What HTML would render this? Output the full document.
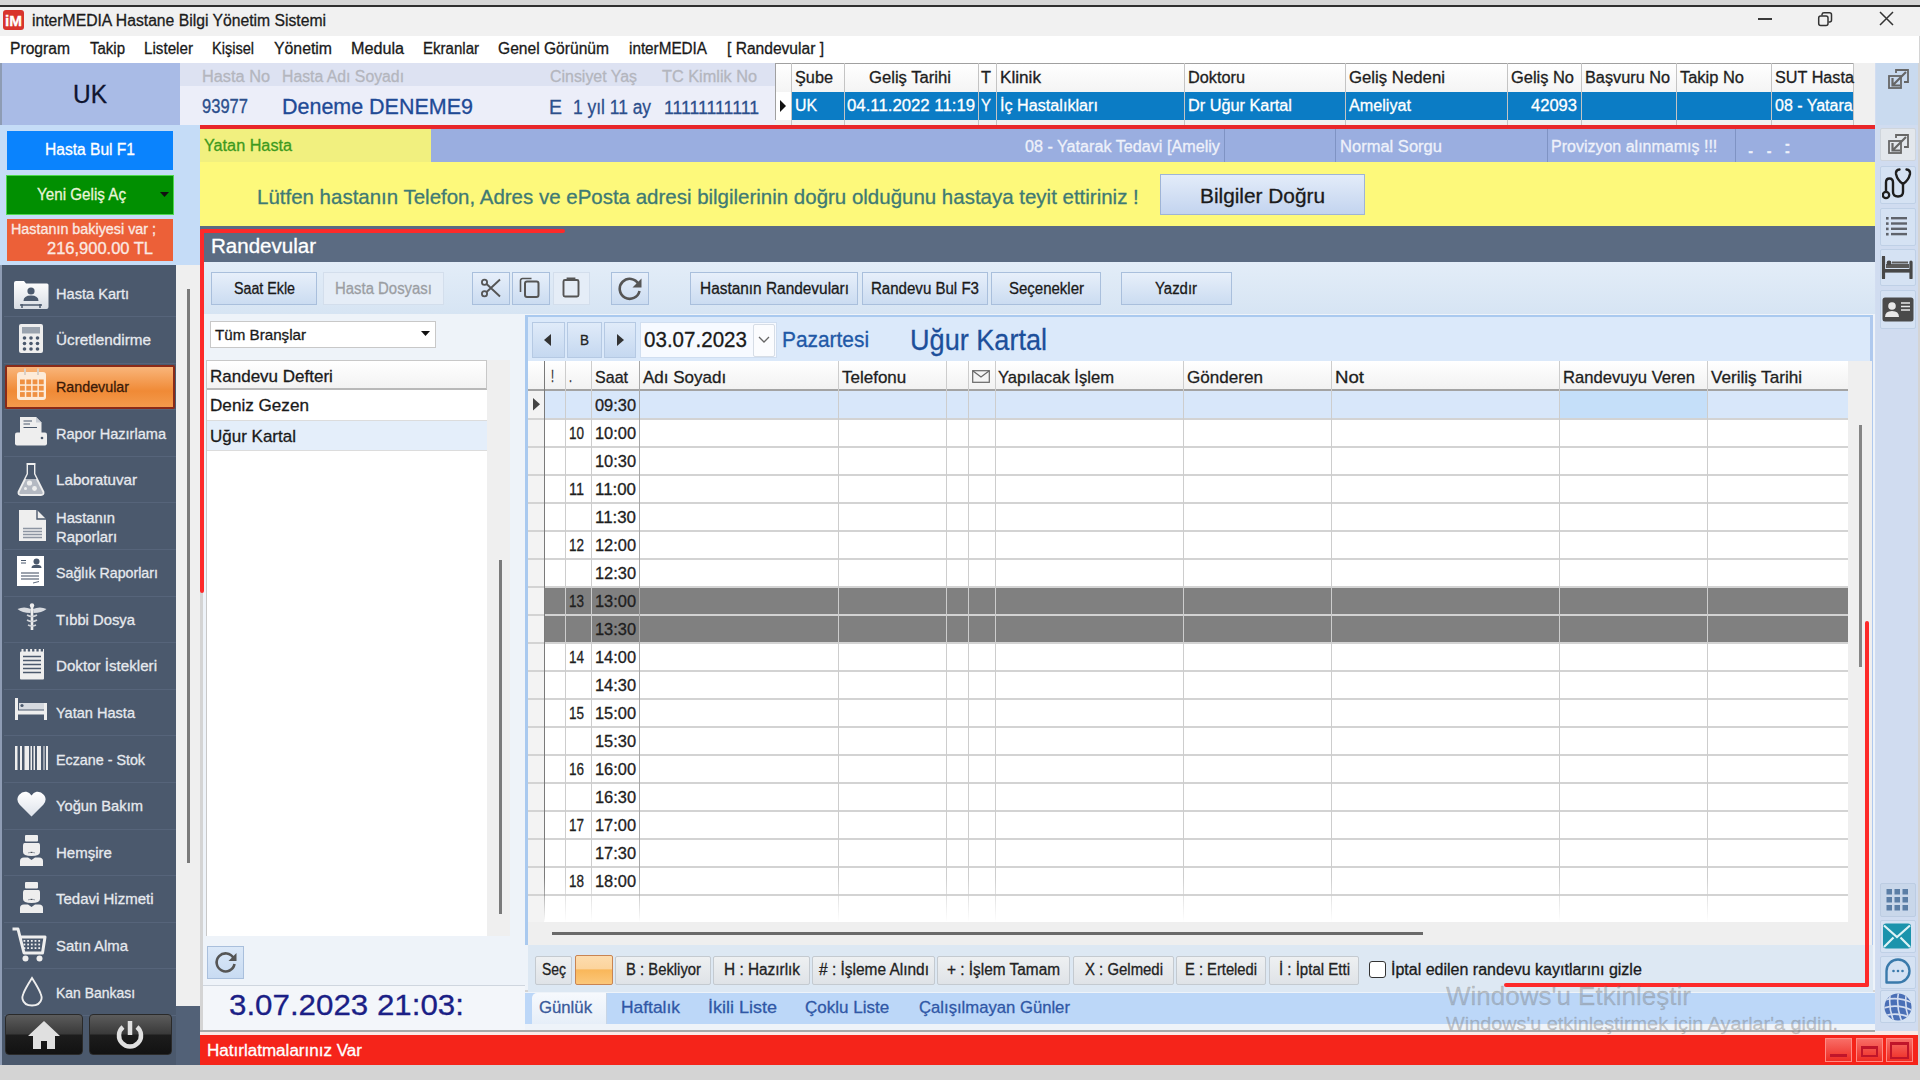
<!DOCTYPE html>
<html><head><meta charset="utf-8">
<style>
*{box-sizing:border-box;margin:0;padding:0}
html,body{width:1920px;height:1080px;overflow:hidden;background:#d4d4d4;font-family:"Liberation Sans",sans-serif;position:relative}
.a{position:absolute}
.t{position:absolute;white-space:nowrap;line-height:1;-webkit-text-stroke:0.3px currentColor}
svg{position:absolute}
</style></head><body>
<div class="a" style="left:0px;top:0px;width:1920px;height:5px;background:#d7d7d7;"></div>
<div class="a" style="left:0px;top:5px;width:1920px;height:2px;background:#303030;"></div>
<div class="a" style="left:0px;top:7px;width:1920px;height:29px;background:#f1f1f1;"></div>
<div class="a" style="left:3px;top:10px;width:21px;height:20px;background:#d8342c;border-radius:3px"></div>
<div class="t" style="left:5.0px;top:12.5px;font-size:15.30px;color:#fff;font-weight:bold;">iM</div>
<div class="t" style="left:32.0px;top:13.2px;font-size:16.00px;color:#1c1c1c;transform:scale(0.982,1.000);transform-origin:0 50%;">interMEDIA Hastane Bilgi Yönetim Sistemi</div>
<div class="a" style="left:1758px;top:18px;width:14px;height:2px;background:#3a3a3a;"></div>
<svg style="left:1817px;top:11px" width="17" height="17" viewBox="0 0 17 17"><rect x="1.7" y="5" width="9.3" height="9.5" rx="2" fill="none" stroke="#333" stroke-width="1.5"/><path d="M5 4.5V3.5A2 2 0 0 1 7 1.7h5.5a2 2 0 0 1 2 2V9a2 2 0 0 1-2 2h-1" fill="none" stroke="#333" stroke-width="1.5"/></svg>
<svg style="left:1879px;top:11px" width="15" height="15" viewBox="0 0 15 15"><path d="M1 1L14 14M14 1L1 14" stroke="#333" stroke-width="1.5"/></svg>
<div class="a" style="left:0px;top:36px;width:1919px;height:27px;background:#ffffff;"></div>
<div class="t" style="left:10.0px;top:41.2px;font-size:16.00px;color:#1a1a1a;transform:scale(0.978,1.000);transform-origin:0 50%;">Program</div>
<div class="t" style="left:90.0px;top:41.2px;font-size:16.00px;color:#1a1a1a;transform:scale(0.937,1.000);transform-origin:0 50%;">Takip</div>
<div class="t" style="left:144.0px;top:41.2px;font-size:16.00px;color:#1a1a1a;transform:scale(0.950,1.000);transform-origin:0 50%;">Listeler</div>
<div class="t" style="left:212.0px;top:41.2px;font-size:16.00px;color:#1a1a1a;transform:scale(0.908,1.000);transform-origin:0 50%;">Kişisel</div>
<div class="t" style="left:274.0px;top:41.2px;font-size:16.00px;color:#1a1a1a;transform:scale(0.988,1.000);transform-origin:0 50%;">Yönetim</div>
<div class="t" style="left:351.0px;top:41.2px;font-size:16.00px;color:#1a1a1a;transform:scale(1.010,1.000);transform-origin:0 50%;">Medula</div>
<div class="t" style="left:423.0px;top:41.2px;font-size:16.00px;color:#1a1a1a;transform:scale(0.940,1.000);transform-origin:0 50%;">Ekranlar</div>
<div class="t" style="left:498.0px;top:41.2px;font-size:16.00px;color:#1a1a1a;transform:scale(0.975,1.000);transform-origin:0 50%;">Genel Görünüm</div>
<div class="t" style="left:629.0px;top:41.2px;font-size:16.00px;color:#1a1a1a;transform:scale(0.954,1.000);transform-origin:0 50%;">interMEDIA</div>
<div class="t" style="left:727.0px;top:41.2px;font-size:16.00px;color:#1a1a1a;transform:scale(0.974,1.000);transform-origin:0 50%;">[ Randevular ]</div>
<div class="a" style="left:0px;top:63px;width:180px;height:62px;background:#a9bbe6;"></div>
<div class="a" style="left:0px;top:63px;width:2px;height:1002px;background:#8e9cb4;"></div>
<div class="t" style="left:73.0px;top:81.3px;font-size:26.00px;color:#0f1530;transform:scale(0.941,1.000);transform-origin:0 50%;">UK</div>
<div class="a" style="left:180px;top:63px;width:595px;height:23px;background:#dde2f2;"></div>
<div class="a" style="left:180px;top:86px;width:595px;height:39px;background:#eceef9;"></div>
<div class="t" style="left:202.0px;top:69.2px;font-size:16.00px;color:#b4b6be;transform:scale(1.020,1.000);transform-origin:0 50%;">Hasta No</div>
<div class="t" style="left:282.0px;top:69.2px;font-size:16.00px;color:#b4b6be;transform:scale(0.987,1.000);transform-origin:0 50%;">Hasta Adı Soyadı</div>
<div class="t" style="left:550.0px;top:69.2px;font-size:16.00px;color:#b4b6be;transform:scale(0.995,1.000);transform-origin:0 50%;">Cinsiyet Yaş</div>
<div class="t" style="left:662.0px;top:69.2px;font-size:16.00px;color:#b4b6be;transform:scale(1.018,1.000);transform-origin:0 50%;">TC Kimlik No</div>
<div class="t" style="left:202.0px;top:97.2px;font-size:18.00px;color:#2c4f8c;transform:scale(0.919,1.150);transform-origin:0 50%;">93977</div>
<div class="t" style="left:282.0px;top:96.5px;font-size:21.48px;color:#1f4a96;">Deneme DENEME9</div>
<div class="t" style="left:549.0px;top:97.2px;font-size:20.00px;color:#2c4f8c;transform:scale(0.974,1.000);transform-origin:0 50%;">E</div>
<div class="t" style="left:573.0px;top:97.2px;font-size:20.00px;color:#2c4f8c;transform:scale(0.870,1.000);transform-origin:0 50%;">1 yıl 11 ay</div>
<div class="t" style="left:664.0px;top:97.7px;font-size:19.00px;color:#2c4f8c;transform:scale(0.930,1.000);transform-origin:0 50%;">11111111111</div>
<div class="a" style="left:775px;top:63px;width:1100px;height:62px;background:#f0f0f0;"></div>
<div class="a" style="left:775px;top:63px;width:1078px;height:29px;background:linear-gradient(#ffffff,#f4f4f4);border-top:1px solid #a0a0a0;border-left:1px solid #a0a0a0"></div>
<div class="a" style="left:775px;top:92px;width:16px;height:28px;background:#ffffff;border-left:1px solid #a0a0a0"></div>
<svg style="left:779px;top:99px" width="8" height="14"><path d="M1 1L7 7L1 13Z" fill="#111"/></svg>
<div class="a" style="left:791px;top:92px;width:1062px;height:28px;background:#0b7cc5;"></div>
<div class="a" style="left:791px;top:63px;width:1px;height:62px;background:#c4c4c4;"></div>
<div class="a" style="left:844px;top:63px;width:1px;height:62px;background:#c4c4c4;"></div>
<div class="a" style="left:978px;top:63px;width:1px;height:62px;background:#c4c4c4;"></div>
<div class="a" style="left:996px;top:63px;width:1px;height:62px;background:#c4c4c4;"></div>
<div class="a" style="left:1184px;top:63px;width:1px;height:62px;background:#c4c4c4;"></div>
<div class="a" style="left:1345px;top:63px;width:1px;height:62px;background:#c4c4c4;"></div>
<div class="a" style="left:1507px;top:63px;width:1px;height:62px;background:#c4c4c4;"></div>
<div class="a" style="left:1581px;top:63px;width:1px;height:62px;background:#c4c4c4;"></div>
<div class="a" style="left:1676px;top:63px;width:1px;height:62px;background:#c4c4c4;"></div>
<div class="a" style="left:1771px;top:63px;width:1px;height:62px;background:#c4c4c4;"></div>
<div class="a" style="left:1853px;top:63px;width:1px;height:62px;background:#c4c4c4;"></div>
<div class="t" style="left:795.0px;top:70.2px;font-size:16.00px;color:#1e1e1e;transform:scale(1.017,1.000);transform-origin:0 50%;">Şube</div>
<div class="t" style="left:869.0px;top:70.2px;font-size:16.00px;color:#1e1e1e;transform:scale(1.040,1.000);transform-origin:0 50%;">Geliş Tarihi</div>
<div class="t" style="left:981.0px;top:70.2px;font-size:16.00px;color:#1e1e1e;transform:scale(1.023,1.000);transform-origin:0 50%;">T</div>
<div class="t" style="left:1000.0px;top:70.2px;font-size:16.00px;color:#1e1e1e;transform:scale(1.072,1.000);transform-origin:0 50%;">Klinik</div>
<div class="t" style="left:1188.0px;top:70.2px;font-size:16.00px;color:#1e1e1e;transform:scale(1.017,1.000);transform-origin:0 50%;">Doktoru</div>
<div class="t" style="left:1349.0px;top:70.2px;font-size:16.00px;color:#1e1e1e;transform:scale(1.048,1.000);transform-origin:0 50%;">Geliş Nedeni</div>
<div class="t" style="left:1511.0px;top:70.2px;font-size:16.00px;color:#1e1e1e;transform:scale(1.027,1.000);transform-origin:0 50%;">Geliş No</div>
<div class="t" style="left:1585.0px;top:70.2px;font-size:16.00px;color:#1e1e1e;transform:scale(1.017,1.000);transform-origin:0 50%;">Başvuru No</div>
<div class="t" style="left:1680.0px;top:70.2px;font-size:16.00px;color:#1e1e1e;transform:scale(1.028,1.000);transform-origin:0 50%;">Takip No</div>
<div class="t" style="left:1775.0px;top:70.2px;font-size:16.00px;color:#1e1e1e;transform:scale(1.013,1.000);transform-origin:0 50%;">SUT Hasta</div>
<div class="t" style="left:795.0px;top:98.2px;font-size:16.00px;color:#ffffff;transform:scale(0.990,1.000);transform-origin:0 50%;">UK</div>
<div class="t" style="left:847.0px;top:98.2px;font-size:16.00px;color:#ffffff;transform:scale(1.048,1.000);transform-origin:0 50%;">04.11.2022 11:19</div>
<div class="t" style="left:981.0px;top:98.2px;font-size:16.00px;color:#ffffff;transform:scale(0.937,1.000);transform-origin:0 50%;">Y</div>
<div class="t" style="left:1000.0px;top:98.2px;font-size:16.00px;color:#ffffff;transform:scale(1.011,1.000);transform-origin:0 50%;">İç Hastalıkları</div>
<div class="t" style="left:1188.0px;top:98.2px;font-size:16.00px;color:#ffffff;transform:scale(1.017,1.000);transform-origin:0 50%;">Dr Uğur Kartal</div>
<div class="t" style="left:1349.0px;top:98.2px;font-size:16.00px;color:#ffffff;transform:scale(1.011,1.000);transform-origin:0 50%;">Ameliyat</div>
<div class="t" style="left:1531.0px;top:98.2px;font-size:16.00px;color:#ffffff;transform:scale(1.034,1.000);transform-origin:0 50%;">42093</div>
<div class="t" style="left:1775.0px;top:98.2px;font-size:16.00px;color:#ffffff;">08 - Yatara</div>
<div class="a" style="left:1875px;top:63px;width:43px;height:1002px;background:#d2ddf1;"></div>
<div class="a" style="left:176px;top:125px;width:24px;height:140px;background:#c5dcf7;"></div>
<div class="a" style="left:0px;top:125px;width:176px;height:140px;background:#c5dcf7;"></div>
<div class="a" style="left:200px;top:125px;width:1675px;height:4px;background:#e8262a;"></div>
<div class="a" style="left:7px;top:131px;width:166px;height:39px;background:#0a83fd;"></div>
<div class="t" style="left:45.0px;top:142.2px;font-size:16.00px;color:#ffffff;transform:scale(0.973,1.000);transform-origin:0 50%;">Hasta Bul  F1</div>
<div class="a" style="left:6px;top:175px;width:168px;height:40px;background:#018f01;border:1px solid #4fd84f"></div>
<div class="t" style="left:37.0px;top:187.2px;font-size:16.00px;color:#e8f5d8;transform:scale(0.950,1.000);transform-origin:0 50%;">Yeni Geliş Aç</div>
<svg style="left:160px;top:192px" width="9" height="6"><path d="M0 0H9L4.5 5Z" fill="#111"/></svg>
<div class="a" style="left:7px;top:219px;width:166px;height:42px;background:#ec6038;"></div>
<div class="t" style="left:11.0px;top:221.7px;font-size:14.00px;color:#fbe9e2;transform:scale(1.024,1.000);transform-origin:0 50%;">Hastanın bakiyesi var ;</div>
<div class="t" style="left:47.0px;top:241.2px;font-size:16.00px;color:#fbe9e2;transform:scale(1.030,1.000);transform-origin:0 50%;">216,900.00 TL</div>
<div class="a" style="left:2px;top:265px;width:174px;height:800px;background:#4b596d;"></div>
<div class="a" style="left:176px;top:265px;width:24px;height:741px;background:#efefef;"></div>
<div class="a" style="left:187px;top:289px;width:3px;height:574px;background:#7a7a7a;"></div>
<div class="a" style="left:176px;top:1006px;width:24px;height:59px;background:#526177;"></div>
<div class="a" style="left:4px;top:316px;width:172px;height:1px;background:#56647a;"></div>
<div class="a" style="left:4px;top:363px;width:172px;height:1px;background:#56647a;"></div>
<div class="a" style="left:4px;top:409px;width:172px;height:1px;background:#56647a;"></div>
<div class="a" style="left:4px;top:456px;width:172px;height:1px;background:#56647a;"></div>
<div class="a" style="left:4px;top:502px;width:172px;height:1px;background:#56647a;"></div>
<div class="a" style="left:4px;top:549px;width:172px;height:1px;background:#56647a;"></div>
<div class="a" style="left:4px;top:596px;width:172px;height:1px;background:#56647a;"></div>
<div class="a" style="left:4px;top:642px;width:172px;height:1px;background:#56647a;"></div>
<div class="a" style="left:4px;top:689px;width:172px;height:1px;background:#56647a;"></div>
<div class="a" style="left:4px;top:735px;width:172px;height:1px;background:#56647a;"></div>
<div class="a" style="left:4px;top:782px;width:172px;height:1px;background:#56647a;"></div>
<div class="a" style="left:4px;top:829px;width:172px;height:1px;background:#56647a;"></div>
<div class="a" style="left:4px;top:875px;width:172px;height:1px;background:#56647a;"></div>
<div class="a" style="left:4px;top:922px;width:172px;height:1px;background:#56647a;"></div>
<div class="a" style="left:4px;top:968px;width:172px;height:1px;background:#56647a;"></div>
<div class="a" style="left:4px;top:1015px;width:172px;height:1px;background:#56647a;"></div>
<div class="a" style="left:5px;top:365px;width:170px;height:44px;background:linear-gradient(#f9b57a,#f08a36 60%,#f39a4c);border:2px solid #8a2a18;border-radius:2px"></div>
<div class="t" style="left:56.0px;top:285.7px;font-size:15.00px;color:#e6e9ee;transform:scale(0.973,1.000);transform-origin:0 50%;">Hasta Kartı</div>
<div class="t" style="left:56.0px;top:331.7px;font-size:15.00px;color:#e6e9ee;transform:scale(1.018,1.000);transform-origin:0 50%;">Ücretlendirme</div>
<div class="t" style="left:56.0px;top:378.7px;font-size:15.00px;color:#3a1a08;transform:scale(0.952,1.000);transform-origin:0 50%;">Randevular</div>
<div class="t" style="left:56.0px;top:425.7px;font-size:15.00px;color:#e6e9ee;transform:scale(0.970,1.000);transform-origin:0 50%;">Rapor Hazırlama</div>
<div class="t" style="left:56.0px;top:471.7px;font-size:15.00px;color:#e6e9ee;transform:scale(1.012,1.000);transform-origin:0 50%;">Laboratuvar</div>
<div class="t" style="left:56.0px;top:509.7px;font-size:15.00px;color:#e6e9ee;transform:scale(0.983,1.000);transform-origin:0 50%;">Hastanın</div>
<div class="t" style="left:56.0px;top:528.7px;font-size:15.00px;color:#e6e9ee;transform:scale(0.989,1.000);transform-origin:0 50%;">Raporları</div>
<div class="t" style="left:56.0px;top:564.7px;font-size:15.00px;color:#e6e9ee;transform:scale(0.948,1.000);transform-origin:0 50%;">Sağlık Raporları</div>
<div class="t" style="left:56.0px;top:611.7px;font-size:15.00px;color:#e6e9ee;transform:scale(0.987,1.000);transform-origin:0 50%;">Tıbbi Dosya</div>
<div class="t" style="left:56.0px;top:657.7px;font-size:15.00px;color:#e6e9ee;transform:scale(1.010,1.000);transform-origin:0 50%;">Doktor İstekleri</div>
<div class="t" style="left:56.0px;top:704.7px;font-size:15.00px;color:#e6e9ee;transform:scale(0.970,1.000);transform-origin:0 50%;">Yatan Hasta</div>
<div class="t" style="left:56.0px;top:751.7px;font-size:15.00px;color:#e6e9ee;transform:scale(0.953,1.000);transform-origin:0 50%;">Eczane - Stok</div>
<div class="t" style="left:56.0px;top:797.7px;font-size:15.00px;color:#e6e9ee;transform:scale(0.981,1.000);transform-origin:0 50%;">Yoğun Bakım</div>
<div class="t" style="left:56.0px;top:844.7px;font-size:15.00px;color:#e6e9ee;">Hemşire</div>
<div class="t" style="left:56.0px;top:890.7px;font-size:15.00px;color:#e6e9ee;">Tedavi Hizmeti</div>
<div class="t" style="left:56.0px;top:937.7px;font-size:15.00px;color:#e6e9ee;transform:scale(0.993,1.000);transform-origin:0 50%;">Satın Alma</div>
<div class="t" style="left:56.0px;top:984.7px;font-size:15.00px;color:#e6e9ee;transform:scale(0.929,1.000);transform-origin:0 50%;">Kan Bankası</div>
<div class="a" style="left:5px;top:1014px;width:78px;height:41px;background:linear-gradient(#5c5c5c,#3a3a3a 48%,#1c1c1c 52%,#121212);border-radius:4px;border:1px solid #2a2a2a"></div>
<div class="a" style="left:89px;top:1014px;width:83px;height:41px;background:linear-gradient(#5c5c5c,#3a3a3a 48%,#1c1c1c 52%,#121212);border-radius:4px;border:1px solid #2a2a2a"></div>
<svg style="left:26px;top:1019px" width="36" height="32" viewBox="0 0 36 32"><path d="M18 2L2 17h5v13h8v-8h6v8h8V17h5Z" fill="#e0e0e0"/></svg>
<svg style="left:113px;top:1018px" width="34" height="34" viewBox="0 0 34 34"><path d="M10 9A11 11 0 1 0 24 9" fill="none" stroke="#e0e0e0" stroke-width="4.5"/><path d="M17 3V17" stroke="#e0e0e0" stroke-width="4.5"/></svg>
<div class="a" style="left:0px;top:1065px;width:1920px;height:15px;background:#d4d4d4;"></div>
<div class="a" style="left:200px;top:129px;width:1675px;height:33px;background:#9aaee0;"></div>
<div class="a" style="left:200px;top:129px;width:231px;height:33px;background:#f1f07f;"></div>
<div class="t" style="left:204.0px;top:138.2px;font-size:16.00px;color:#3e9a1e;transform:scale(1.013,1.000);transform-origin:0 50%;">Yatan Hasta</div>
<div class="a" style="left:1224px;top:129px;width:1px;height:33px;background:#7f93c4;"></div>
<div class="a" style="left:1335px;top:129px;width:1px;height:33px;background:#7f93c4;"></div>
<div class="a" style="left:1547px;top:129px;width:1px;height:33px;background:#7f93c4;"></div>
<div class="a" style="left:1735px;top:129px;width:1px;height:33px;background:#7f93c4;"></div>
<div class="t" style="left:1025.0px;top:139.2px;font-size:16.00px;color:#eef1fa;transform:scale(1.010,1.000);transform-origin:0 50%;">08 - Yatarak Tedavi [Ameliy</div>
<div class="t" style="left:1340.0px;top:139.2px;font-size:16.00px;color:#eef1fa;transform:scale(1.033,1.000);transform-origin:0 50%;">Normal Sorgu</div>
<div class="t" style="left:1551.0px;top:139.2px;font-size:16.00px;color:#eef1fa;">Provizyon alınmamış !!!</div>
<div class="t" style="left:1746.0px;top:140.2px;font-size:16.00px;color:#eef1fa;transform:scale(2.070,1.000);transform-origin:0 50%;">. .     :</div>
<div class="a" style="left:200px;top:162px;width:1675px;height:64px;background:#fdf97b;"></div>
<div class="t" style="left:257.0px;top:185.7px;font-size:21.00px;color:#3f7a74;transform:scale(0.975,1.000);transform-origin:0 50%;">Lütfen hastanın Telefon, Adres ve ePosta adresi bilgilerinin doğru olduğunu hastaya teyit ettiriniz !</div>
<div class="a" style="left:1160px;top:174px;width:205px;height:41px;background:linear-gradient(#e3ecf9,#c3d4ef);border:1px solid #9fb4d6"></div>
<div class="t" style="left:1199.5px;top:186.2px;font-size:20.00px;color:#1a1a1a;transform:scale(1.041,1.000);transform-origin:0 50%;">Bilgiler Doğru</div>
<div class="a" style="left:200px;top:226px;width:1675px;height:36px;background:#5b6b82;"></div>
<div class="t" style="left:211.0px;top:236.2px;font-size:20.00px;color:#ffffff;transform:scale(1.027,1.000);transform-origin:0 50%;">Randevular</div>
<div class="a" style="left:203px;top:262px;width:1672px;height:54px;background:linear-gradient(#e3edf8,#d6e4f3)"></div>
<div class="a" style="left:211px;top:272px;width:106px;height:33px;background:linear-gradient(#e7effa,#cbdcf1);border:1px solid #a9bfdc"></div>
<div class="t" style="left:233.5px;top:281.2px;font-size:16.00px;color:#1a1a1a;transform:scale(0.891,1.000);transform-origin:0 50%;">Saat Ekle</div>
<div class="a" style="left:323px;top:272px;width:121px;height:33px;background:#e5edf7;border:1px solid #d3deec"></div>
<div class="t" style="left:334.5px;top:281.2px;font-size:16.00px;color:#9b9ea3;transform:scale(0.932,1.000);transform-origin:0 50%;">Hasta Dosyası</div>
<div class="a" style="left:472px;top:272px;width:38px;height:33px;background:linear-gradient(#e7effa,#cbdcf1);border:1px solid #a9bfdc"></div>
<div class="a" style="left:512px;top:272px;width:38px;height:33px;background:linear-gradient(#e7effa,#cbdcf1);border:1px solid #a9bfdc"></div>
<div class="a" style="left:553px;top:272px;width:37px;height:33px;background:#e5edf7;border:1px solid #d3deec"></div>
<div class="a" style="left:611px;top:272px;width:38px;height:33px;background:linear-gradient(#e7effa,#cbdcf1);border:1px solid #a9bfdc"></div>
<svg style="left:478px;top:276px" width="26" height="24" viewBox="0 0 26 24"><circle cx="6.5" cy="6.3" r="2.6" fill="none" stroke="#555" stroke-width="1.8"/><circle cx="6.5" cy="17.7" r="2.6" fill="none" stroke="#555" stroke-width="1.8"/><path d="M8.6 8L22 20.5M8.6 16L22 3.5" stroke="#555" stroke-width="1.9"/></svg>
<svg style="left:518px;top:276px" width="26" height="24" viewBox="0 0 26 24"><path d="M2.5 16V4.5a2 2 0 0 1 2-2h9" fill="none" stroke="#555" stroke-width="1.6"/><rect x="7" y="5.5" width="13.5" height="15.5" rx="2" fill="none" stroke="#555" stroke-width="2"/></svg>
<svg style="left:558px;top:276px" width="26" height="24" viewBox="0 0 26 24"><rect x="5.5" y="4" width="15" height="16.5" rx="1.5" fill="none" stroke="#555" stroke-width="1.9"/><path d="M9.5 5V2.5h7V5" fill="none" stroke="#555" stroke-width="1.8"/></svg>
<svg style="left:616px;top:275px" width="28" height="26" viewBox="0 0 28 26"><path d="M22.5 9A10 10 0 1 0 23.5 16" fill="none" stroke="#555" stroke-width="2.6"/><path d="M25.5 3.5V12.5H16.5Z" fill="#555"/></svg>
<div class="a" style="left:690px;top:272px;width:168px;height:33px;background:linear-gradient(#e7effa,#cbdcf1);border:1px solid #a9bfdc"></div>
<div class="t" style="left:699.5px;top:281.2px;font-size:16.00px;color:#1a1a1a;transform:scale(0.963,1.000);transform-origin:0 50%;">Hastanın Randevuları</div>
<div class="a" style="left:862px;top:272px;width:126px;height:33px;background:linear-gradient(#e7effa,#cbdcf1);border:1px solid #a9bfdc"></div>
<div class="t" style="left:871.0px;top:281.2px;font-size:16.00px;color:#1a1a1a;transform:scale(0.941,1.000);transform-origin:0 50%;">Randevu Bul F3</div>
<div class="a" style="left:991px;top:272px;width:110px;height:33px;background:linear-gradient(#e7effa,#cbdcf1);border:1px solid #a9bfdc"></div>
<div class="t" style="left:1008.5px;top:281.2px;font-size:16.00px;color:#1a1a1a;transform:scale(0.937,1.000);transform-origin:0 50%;">Seçenekler</div>
<div class="a" style="left:1121px;top:272px;width:111px;height:33px;background:linear-gradient(#e7effa,#cbdcf1);border:1px solid #a9bfdc"></div>
<div class="t" style="left:1155.0px;top:281.2px;font-size:16.00px;color:#1a1a1a;transform:scale(0.932,1.000);transform-origin:0 50%;">Yazdır</div>
<div class="a" style="left:203px;top:314px;width:322px;height:676px;background:#eef3f9;"></div>
<div class="a" style="left:210px;top:321px;width:226px;height:27px;background:#fff;border:1px solid #c8c8c8"></div>
<div class="t" style="left:215.0px;top:326.7px;font-size:15.00px;color:#1a1a1a;transform:scale(1.011,1.000);transform-origin:0 50%;">Tüm Branşlar</div>
<svg style="left:421px;top:331px" width="9" height="6"><path d="M0 0H9L4.5 5Z" fill="#111"/></svg>
<div class="a" style="left:206px;top:360px;width:304px;height:576px;background:#ffffff;border-left:1px solid #c8c8c8;border-top:1px solid #c8c8c8"></div>
<div class="a" style="left:487px;top:360px;width:23px;height:576px;background:#efefef;"></div>
<div class="a" style="left:499px;top:560px;width:3px;height:354px;background:#7a7a7a;"></div>
<div class="a" style="left:207px;top:361px;width:280px;height:29px;background:linear-gradient(#ffffff,#f3f3f3);border-bottom:2px solid #b9b9b9;border-right:1px solid #c8c8c8"></div>
<div class="t" style="left:210.0px;top:367.7px;font-size:17.00px;color:#1a1a1a;">Randevu Defteri</div>
<div class="a" style="left:207px;top:420px;width:280px;height:1px;background:#dcdcdc;"></div>
<div class="a" style="left:207px;top:421px;width:280px;height:30px;background:#e4eefa;"></div>
<div class="a" style="left:207px;top:450px;width:280px;height:1px;background:#dcdcdc;"></div>
<div class="t" style="left:210.0px;top:396.7px;font-size:17.00px;color:#1a1a1a;transform:scale(1.007,1.000);transform-origin:0 50%;">Deniz Gezen</div>
<div class="t" style="left:210.0px;top:427.7px;font-size:17.00px;color:#1a1a1a;">Uğur Kartal</div>
<div class="a" style="left:207px;top:946px;width:37px;height:33px;background:linear-gradient(#dbe8f8,#c8dbf2);border:1px solid #a9bfdc"></div>
<svg style="left:212px;top:949px" width="28" height="26" viewBox="0 0 28 26"><path d="M21.5 9A9 9 0 1 0 22.5 15" fill="none" stroke="#555" stroke-width="2.6"/><path d="M24.5 4V12H16.5Z" fill="#555"/></svg>
<div class="a" style="left:203px;top:985px;width:322px;height:1px;background:#cfd6df;"></div>
<div class="a" style="left:203px;top:986px;width:322px;height:44px;background:#f3f6fa;"></div>
<div class="t" style="left:229.0px;top:990.3px;font-size:30.00px;color:#1b1f86;transform:scale(1.043,1.000);transform-origin:0 50%;">3.07.2023 21:03:</div>
<div class="a" style="left:525px;top:314px;width:1350px;height:676px;background:#eef3f9;"></div>
<div class="a" style="left:525px;top:315px;width:1348px;height:630px;background:#dbe9fa;border-left:3px solid #a9c9ef;border-top:2px solid #a9c9ef;border-right:3px solid #afc9ee"></div>
<div class="a" style="left:532px;top:322px;width:33px;height:36px;background:linear-gradient(#e0ebf9,#c5d8f0);border:1px solid #b5c9e3"></div>
<div class="a" style="left:567px;top:322px;width:35px;height:36px;background:linear-gradient(#e0ebf9,#c5d8f0);border:1px solid #b5c9e3"></div>
<div class="a" style="left:604px;top:322px;width:32px;height:36px;background:linear-gradient(#e0ebf9,#c5d8f0);border:1px solid #b5c9e3"></div>
<svg style="left:544px;top:334px" width="8" height="12"><path d="M7 0V12L0 6Z" fill="#333"/></svg>
<svg style="left:617px;top:334px" width="8" height="12"><path d="M0 0V12L7 6Z" fill="#333"/></svg>
<div class="t" style="left:579.5px;top:333.2px;font-size:14.00px;color:#222;transform:scale(0.964,1.000);transform-origin:0 50%;">B</div>
<div class="a" style="left:640px;top:322px;width:137px;height:36px;background:#f7faff;border:1px solid #d0def0"></div>
<div class="a" style="left:753px;top:324px;width:22px;height:33px;background:#fbfcfe;border:1px solid #d6dde6;border-radius:2px"></div>
<svg style="left:758px;top:336px" width="12" height="8"><path d="M1 1L6 6L11 1" fill="none" stroke="#666" stroke-width="1.3"/></svg>
<div class="t" style="left:644.0px;top:329.3px;font-size:22.00px;color:#1a1a1a;transform:scale(0.935,1.000);transform-origin:0 50%;">03.07.2023</div>
<div class="t" style="left:782.0px;top:329.3px;font-size:22.00px;color:#2158a6;transform:scale(0.949,1.000);transform-origin:0 50%;">Pazartesi</div>
<div class="t" style="left:910.0px;top:325.3px;font-size:30.00px;color:#1d4f9a;transform:scale(0.903,1.000);transform-origin:0 50%;">Uğur Kartal</div>
<div class="a" style="left:528px;top:361px;width:1320px;height:561px;background:#ffffff;"></div>
<div class="a" style="left:1848px;top:361px;width:24px;height:584px;background:#efefef;"></div>
<div class="a" style="left:1859px;top:425px;width:3px;height:242px;background:#858585;"></div>
<div class="a" style="left:528px;top:922px;width:1320px;height:23px;background:#efefef;"></div>
<div class="a" style="left:552px;top:932px;width:871px;height:3px;background:#6a6a6a;"></div>
<div class="a" style="left:528px;top:361px;width:1320px;height:30px;background:linear-gradient(#ffffff,#f2f2f2);border-bottom:2px solid #a3a3a3"></div>
<div class="a" style="left:528px;top:391px;width:16px;height:531px;background:#f3f3f3;"></div>
<div class="a" style="left:545px;top:391px;width:1303px;height:28px;background:#d8e7fa;"></div>
<div class="a" style="left:1559px;top:391px;width:148px;height:28px;background:#c5dff9;"></div>
<div class="a" style="left:545px;top:587px;width:1303px;height:56px;background:#808080;"></div>
<div class="a" style="left:528px;top:418px;width:1320px;height:2px;background:#d3d3d3;"></div>
<div class="a" style="left:528px;top:446px;width:1320px;height:2px;background:#d3d3d3;"></div>
<div class="a" style="left:528px;top:474px;width:1320px;height:2px;background:#d3d3d3;"></div>
<div class="a" style="left:528px;top:502px;width:1320px;height:2px;background:#d3d3d3;"></div>
<div class="a" style="left:528px;top:530px;width:1320px;height:2px;background:#d3d3d3;"></div>
<div class="a" style="left:528px;top:558px;width:1320px;height:2px;background:#d3d3d3;"></div>
<div class="a" style="left:528px;top:586px;width:1320px;height:2px;background:#d3d3d3;"></div>
<div class="a" style="left:528px;top:614px;width:1320px;height:2px;background:#d3d3d3;"></div>
<div class="a" style="left:528px;top:642px;width:1320px;height:2px;background:#d3d3d3;"></div>
<div class="a" style="left:528px;top:670px;width:1320px;height:2px;background:#d3d3d3;"></div>
<div class="a" style="left:528px;top:698px;width:1320px;height:2px;background:#d3d3d3;"></div>
<div class="a" style="left:528px;top:726px;width:1320px;height:2px;background:#d3d3d3;"></div>
<div class="a" style="left:528px;top:754px;width:1320px;height:2px;background:#d3d3d3;"></div>
<div class="a" style="left:528px;top:782px;width:1320px;height:2px;background:#d3d3d3;"></div>
<div class="a" style="left:528px;top:810px;width:1320px;height:2px;background:#d3d3d3;"></div>
<div class="a" style="left:528px;top:838px;width:1320px;height:2px;background:#d3d3d3;"></div>
<div class="a" style="left:528px;top:866px;width:1320px;height:2px;background:#d3d3d3;"></div>
<div class="a" style="left:528px;top:894px;width:1320px;height:2px;background:#d3d3d3;"></div>
<div class="a" style="left:544px;top:361px;width:1px;height:561px;background:linear-gradient(#7a7a7a 92%,rgba(255,255,255,0))"></div>
<div class="a" style="left:565px;top:361px;width:1px;height:561px;background:linear-gradient(#cdcdcd 92%,rgba(255,255,255,0))"></div>
<div class="a" style="left:591px;top:361px;width:1px;height:561px;background:linear-gradient(#cdcdcd 92%,rgba(255,255,255,0))"></div>
<div class="a" style="left:639px;top:361px;width:1px;height:561px;background:linear-gradient(#a9a9a9 92%,rgba(255,255,255,0))"></div>
<div class="a" style="left:838px;top:361px;width:1px;height:561px;background:linear-gradient(#cdcdcd 92%,rgba(255,255,255,0))"></div>
<div class="a" style="left:946px;top:361px;width:1px;height:561px;background:linear-gradient(#cdcdcd 92%,rgba(255,255,255,0))"></div>
<div class="a" style="left:968px;top:361px;width:1px;height:561px;background:linear-gradient(#cdcdcd 92%,rgba(255,255,255,0))"></div>
<div class="a" style="left:995px;top:361px;width:1px;height:561px;background:linear-gradient(#cdcdcd 92%,rgba(255,255,255,0))"></div>
<div class="a" style="left:1183px;top:361px;width:1px;height:561px;background:linear-gradient(#cdcdcd 92%,rgba(255,255,255,0))"></div>
<div class="a" style="left:1331px;top:361px;width:1px;height:561px;background:linear-gradient(#cdcdcd 92%,rgba(255,255,255,0))"></div>
<div class="a" style="left:1559px;top:361px;width:1px;height:561px;background:linear-gradient(#cdcdcd 92%,rgba(255,255,255,0))"></div>
<div class="a" style="left:1707px;top:361px;width:1px;height:561px;background:linear-gradient(#cdcdcd 92%,rgba(255,255,255,0))"></div>
<svg style="left:533px;top:398px" width="8" height="13"><path d="M0 0V12.5L7 6.25Z" fill="#444"/></svg>
<div class="t" style="left:595.0px;top:397.7px;font-size:16.00px;color:#1e1e1e;transform:scale(1.024,1.000);transform-origin:0 50%;">09:30</div>
<div class="t" style="left:595.0px;top:425.7px;font-size:16.00px;color:#1e1e1e;transform:scale(1.024,1.000);transform-origin:0 50%;">10:00</div>
<div class="t" style="left:569.0px;top:425.7px;font-size:16.00px;color:#1e1e1e;transform:scale(0.843,1.000);transform-origin:0 50%;">10</div>
<div class="t" style="left:595.0px;top:453.7px;font-size:16.00px;color:#1e1e1e;transform:scale(1.024,1.000);transform-origin:0 50%;">10:30</div>
<div class="t" style="left:595.0px;top:481.7px;font-size:16.00px;color:#1e1e1e;transform:scale(1.055,1.000);transform-origin:0 50%;">11:00</div>
<div class="t" style="left:569.0px;top:481.7px;font-size:16.00px;color:#1e1e1e;transform:scale(0.903,1.000);transform-origin:0 50%;">11</div>
<div class="t" style="left:595.0px;top:509.7px;font-size:16.00px;color:#1e1e1e;transform:scale(1.055,1.000);transform-origin:0 50%;">11:30</div>
<div class="t" style="left:595.0px;top:537.7px;font-size:16.00px;color:#1e1e1e;transform:scale(1.024,1.000);transform-origin:0 50%;">12:00</div>
<div class="t" style="left:569.0px;top:537.7px;font-size:16.00px;color:#1e1e1e;transform:scale(0.843,1.000);transform-origin:0 50%;">12</div>
<div class="t" style="left:595.0px;top:565.7px;font-size:16.00px;color:#1e1e1e;transform:scale(1.024,1.000);transform-origin:0 50%;">12:30</div>
<div class="t" style="left:595.0px;top:593.7px;font-size:16.00px;color:#1e1e1e;transform:scale(1.024,1.000);transform-origin:0 50%;">13:00</div>
<div class="t" style="left:569.0px;top:593.7px;font-size:16.00px;color:#1e1e1e;transform:scale(0.843,1.000);transform-origin:0 50%;">13</div>
<div class="t" style="left:595.0px;top:621.7px;font-size:16.00px;color:#1e1e1e;transform:scale(1.024,1.000);transform-origin:0 50%;">13:30</div>
<div class="t" style="left:595.0px;top:649.7px;font-size:16.00px;color:#1e1e1e;transform:scale(1.024,1.000);transform-origin:0 50%;">14:00</div>
<div class="t" style="left:569.0px;top:649.7px;font-size:16.00px;color:#1e1e1e;transform:scale(0.843,1.000);transform-origin:0 50%;">14</div>
<div class="t" style="left:595.0px;top:677.7px;font-size:16.00px;color:#1e1e1e;transform:scale(1.024,1.000);transform-origin:0 50%;">14:30</div>
<div class="t" style="left:595.0px;top:705.7px;font-size:16.00px;color:#1e1e1e;transform:scale(1.024,1.000);transform-origin:0 50%;">15:00</div>
<div class="t" style="left:569.0px;top:705.7px;font-size:16.00px;color:#1e1e1e;transform:scale(0.843,1.000);transform-origin:0 50%;">15</div>
<div class="t" style="left:595.0px;top:733.7px;font-size:16.00px;color:#1e1e1e;transform:scale(1.024,1.000);transform-origin:0 50%;">15:30</div>
<div class="t" style="left:595.0px;top:761.7px;font-size:16.00px;color:#1e1e1e;transform:scale(1.024,1.000);transform-origin:0 50%;">16:00</div>
<div class="t" style="left:569.0px;top:761.7px;font-size:16.00px;color:#1e1e1e;transform:scale(0.843,1.000);transform-origin:0 50%;">16</div>
<div class="t" style="left:595.0px;top:789.7px;font-size:16.00px;color:#1e1e1e;transform:scale(1.024,1.000);transform-origin:0 50%;">16:30</div>
<div class="t" style="left:595.0px;top:817.7px;font-size:16.00px;color:#1e1e1e;transform:scale(1.024,1.000);transform-origin:0 50%;">17:00</div>
<div class="t" style="left:569.0px;top:817.7px;font-size:16.00px;color:#1e1e1e;transform:scale(0.843,1.000);transform-origin:0 50%;">17</div>
<div class="t" style="left:595.0px;top:845.7px;font-size:16.00px;color:#1e1e1e;transform:scale(1.024,1.000);transform-origin:0 50%;">17:30</div>
<div class="t" style="left:595.0px;top:873.7px;font-size:16.00px;color:#1e1e1e;transform:scale(1.024,1.000);transform-origin:0 50%;">18:00</div>
<div class="t" style="left:569.0px;top:873.7px;font-size:16.00px;color:#1e1e1e;transform:scale(0.843,1.000);transform-origin:0 50%;">18</div>
<div class="t" style="left:551.0px;top:369.2px;font-size:16.00px;color:#333;transform:scale(0.675,1.000);transform-origin:0 50%;">!</div>
<div class="t" style="left:569.0px;top:369.2px;font-size:16.00px;color:#333;transform:scale(0.675,1.000);transform-origin:0 50%;">.</div>
<div class="t" style="left:595.0px;top:368.7px;font-size:17.00px;color:#1e1e1e;transform:scale(0.944,1.000);transform-origin:0 50%;">Saat</div>
<div class="t" style="left:643.0px;top:368.7px;font-size:17.00px;color:#1e1e1e;">Adı Soyadı</div>
<div class="t" style="left:842.0px;top:368.7px;font-size:17.00px;color:#1e1e1e;">Telefonu</div>
<div class="t" style="left:998.0px;top:368.7px;font-size:17.00px;color:#1e1e1e;transform:scale(0.977,1.000);transform-origin:0 50%;">Yapılacak İşlem</div>
<div class="t" style="left:1187.0px;top:368.7px;font-size:17.00px;color:#1e1e1e;transform:scale(1.005,1.000);transform-origin:0 50%;">Gönderen</div>
<div class="t" style="left:1335.0px;top:368.7px;font-size:17.00px;color:#1e1e1e;transform:scale(1.096,1.000);transform-origin:0 50%;">Not</div>
<div class="t" style="left:1563.0px;top:368.7px;font-size:17.00px;color:#1e1e1e;transform:scale(0.977,1.000);transform-origin:0 50%;">Randevuyu Veren</div>
<div class="t" style="left:1711.0px;top:368.7px;font-size:17.00px;color:#1e1e1e;transform:scale(1.007,1.000);transform-origin:0 50%;">Veriliş Tarihi</div>
<svg style="left:972px;top:370px" width="18" height="13" viewBox="0 0 18 13"><rect x="0.7" y="0.7" width="16.6" height="11.6" fill="#f4f4f4" stroke="#666" stroke-width="1.2"/><path d="M0.7 0.7L9 7L17.3 0.7" fill="none" stroke="#666" stroke-width="1.2"/></svg>
<div class="a" style="left:528px;top:945px;width:1345px;height:47px;background:#dde8f3;"></div>
<div class="a" style="left:535px;top:956px;width:37px;height:29px;background:linear-gradient(#eef0f2,#dfe3e7);border:1px solid #c4cad0;border-radius:2px"></div>
<div class="t" style="left:541.5px;top:962.2px;font-size:16.00px;color:#222;transform:scale(0.870,1.000);transform-origin:0 50%;">Seç</div>
<div class="a" style="left:615px;top:956px;width:96px;height:29px;background:linear-gradient(#eef0f2,#dfe3e7);border:1px solid #c4cad0;border-radius:2px"></div>
<div class="t" style="left:625.5px;top:962.2px;font-size:16.00px;color:#222;transform:scale(0.927,1.000);transform-origin:0 50%;">B : Bekliyor</div>
<div class="a" style="left:713px;top:956px;width:97px;height:29px;background:linear-gradient(#eef0f2,#dfe3e7);border:1px solid #c4cad0;border-radius:2px"></div>
<div class="t" style="left:723.5px;top:962.2px;font-size:16.00px;color:#222;transform:scale(0.961,1.000);transform-origin:0 50%;">H : Hazırlık</div>
<div class="a" style="left:812px;top:956px;width:123px;height:29px;background:linear-gradient(#eef0f2,#dfe3e7);border:1px solid #c4cad0;border-radius:2px"></div>
<div class="t" style="left:818.5px;top:962.2px;font-size:16.00px;color:#222;transform:scale(0.966,1.000);transform-origin:0 50%;"># : İşleme Alındı</div>
<div class="a" style="left:937px;top:956px;width:133px;height:29px;background:linear-gradient(#eef0f2,#dfe3e7);border:1px solid #c4cad0;border-radius:2px"></div>
<div class="t" style="left:947.0px;top:962.2px;font-size:16.00px;color:#222;transform:scale(0.962,1.000);transform-origin:0 50%;">+ : İşlem Tamam</div>
<div class="a" style="left:1073px;top:956px;width:101px;height:29px;background:linear-gradient(#eef0f2,#dfe3e7);border:1px solid #c4cad0;border-radius:2px"></div>
<div class="t" style="left:1084.5px;top:962.2px;font-size:16.00px;color:#222;transform:scale(0.933,1.000);transform-origin:0 50%;">X : Gelmedi</div>
<div class="a" style="left:1176px;top:956px;width:90px;height:29px;background:linear-gradient(#eef0f2,#dfe3e7);border:1px solid #c4cad0;border-radius:2px"></div>
<div class="t" style="left:1185.0px;top:962.2px;font-size:16.00px;color:#222;transform:scale(0.920,1.000);transform-origin:0 50%;">E : Erteledi</div>
<div class="a" style="left:1269px;top:956px;width:90px;height:29px;background:linear-gradient(#eef0f2,#dfe3e7);border:1px solid #c4cad0;border-radius:2px"></div>
<div class="t" style="left:1278.5px;top:962.2px;font-size:16.00px;color:#222;transform:scale(0.939,1.000);transform-origin:0 50%;">İ : İptal Etti</div>
<div class="a" style="left:575px;top:955px;width:38px;height:30px;background:linear-gradient(#fddcae 0%,#fcd49d 45%,#f9b75a 50%,#fbc77a 100%);border:1px solid #c98452;border-radius:2px"></div>
<div class="a" style="left:1369px;top:961px;width:17px;height:17px;background:#fff;border:1px solid #333;border-radius:3px"></div>
<div class="t" style="left:1391.0px;top:962.2px;font-size:16.00px;color:#1a1a1a;">İptal edilen randevu kayıtlarını gizle</div>
<div class="a" style="left:525px;top:992px;width:1350px;height:38px;background:#eef3f9;"></div>
<div class="a" style="left:525px;top:993px;width:1350px;height:31px;background:#bcd7f8;"></div>
<div class="a" style="left:532px;top:993px;width:75px;height:31px;background:linear-gradient(#f6f9fd,#e6eef8);border-radius:5px 0 0 0;border-right:1px solid #c7d5e6"></div>
<div class="t" style="left:539.0px;top:998.7px;font-size:17.00px;color:#3a5a9a;transform:scale(0.984,1.000);transform-origin:0 50%;">Günlük</div>
<div class="t" style="left:621.0px;top:998.7px;font-size:17.00px;color:#3057a6;transform:scale(1.024,1.000);transform-origin:0 50%;">Haftalık</div>
<div class="t" style="left:708.0px;top:998.7px;font-size:17.00px;color:#3057a6;transform:scale(1.058,1.000);transform-origin:0 50%;">İkili Liste</div>
<div class="t" style="left:805.0px;top:998.7px;font-size:17.00px;color:#3057a6;">Çoklu Liste</div>
<div class="t" style="left:919.0px;top:998.7px;font-size:17.00px;color:#3057a6;transform:scale(0.980,1.000);transform-origin:0 50%;">Çalışılmayan Günler</div>
<div class="a" style="left:200px;top:1031px;width:1718px;height:34px;background:#f5241a;"></div>
<div class="a" style="left:200px;top:1031px;width:1718px;height:4px;background:#fbe9e6;"></div>
<div class="a" style="left:200px;top:1030px;width:1675px;height:2px;background:#a8a8a8;"></div>
<div class="t" style="left:207.0px;top:1043.2px;font-size:16.00px;color:#ffffff;transform:scale(1.065,1.000);transform-origin:0 50%;">Hatırlatmalarınız Var</div>
<div class="a" style="left:1825px;top:1038px;width:27px;height:24px;background:linear-gradient(#f86d66,#ee2c24);border:1px solid #ff8a84"></div>
<div class="a" style="left:1856px;top:1038px;width:27px;height:24px;background:linear-gradient(#f86d66,#ee2c24);border:1px solid #ff8a84"></div>
<div class="a" style="left:1886px;top:1038px;width:27px;height:24px;background:linear-gradient(#f86d66,#ee2c24);border:1px solid #ff8a84"></div>
<div class="a" style="left:1830px;top:1054px;width:17px;height:3px;background:#c0152a;"></div>
<div class="a" style="left:1861px;top:1046px;width:17px;height:11px;border:2px solid #c0152a;border-top-width:3px"></div>
<div class="a" style="left:1890px;top:1042px;width:19px;height:17px;border:2px solid #c0152a;border-top-width:3px"></div>
<svg style="left:13px;top:280px" width="36" height="30" viewBox="0 0 36 30"><defs><linearGradient id="fg" x1="0" y1="0" x2="0" y2="1"><stop offset="0" stop-color="#ffffff"/><stop offset="1" stop-color="#d8dde4"/></linearGradient></defs><path d="M1 3Q1 1 3 1H11L13 3.5H34Q35.5 3.5 35.5 5V27Q35.5 29 33.5 29H2.5Q1 29 1 27.5Z" fill="url(#fg)"/><circle cx="18" cy="11" r="3.6" fill="#4b596d"/><path d="M10.5 21Q10.5 15.5 18 15.5Q25.5 15.5 25.5 21Z" fill="#4b596d"/><path d="M7 25H29M9 24V28M27 24V28" stroke="#4b596d" stroke-width="1.5"/></svg>
<svg style="left:19px;top:324px" width="24" height="29" viewBox="0 0 24 29"><rect x="0" y="0" width="24" height="29" rx="2" fill="#eeeeee"/><rect x="3" y="3" width="18" height="6.5" fill="#9aa3ae"/><circle cx="5.5" cy="14.0" r="1.8" fill="#4b596d"/><circle cx="12.0" cy="14.0" r="1.8" fill="#4b596d"/><circle cx="18.5" cy="14.0" r="1.8" fill="#4b596d"/><circle cx="5.5" cy="19.5" r="1.8" fill="#4b596d"/><circle cx="12.0" cy="19.5" r="1.8" fill="#4b596d"/><circle cx="18.5" cy="19.5" r="1.8" fill="#4b596d"/><circle cx="5.5" cy="25.0" r="1.8" fill="#4b596d"/><circle cx="12.0" cy="25.0" r="1.8" fill="#4b596d"/><circle cx="18.5" cy="25.0" r="1.8" fill="#4b596d"/></svg>
<svg style="left:16px;top:368px" width="31" height="33" viewBox="0 0 31 33"><rect x="1" y="4" width="29" height="28" rx="3" fill="#fdebd9"/><path d="M9 0.5V7M22 0.5V7" stroke="#d9cfc6" stroke-width="2"/><rect x="4.0" y="11.5" width="4.8" height="4.8" fill="#ef9143"/><rect x="10.3" y="11.5" width="4.8" height="4.8" fill="#ef9143"/><rect x="16.6" y="11.5" width="4.8" height="4.8" fill="#ef9143"/><rect x="22.9" y="11.5" width="4.8" height="4.8" fill="#ef9143"/><rect x="4.0" y="17.8" width="4.8" height="4.8" fill="#ef9143"/><rect x="10.3" y="17.8" width="4.8" height="4.8" fill="#ef9143"/><rect x="16.6" y="17.8" width="4.8" height="4.8" fill="#ef9143"/><rect x="22.9" y="17.8" width="4.8" height="4.8" fill="#ef9143"/><rect x="4.0" y="24.1" width="4.8" height="4.8" fill="#ef9143"/><rect x="10.3" y="24.1" width="4.8" height="4.8" fill="#ef9143"/><rect x="16.6" y="24.1" width="4.8" height="4.8" fill="#ef9143"/><rect x="22.9" y="24.1" width="4.8" height="4.8" fill="#ef9143"/></svg>
<svg style="left:15px;top:416px" width="32" height="30" viewBox="0 0 32 30"><path d="M5 1H21L26.5 6.5V17H5Z" fill="#eeeeee"/><path d="M21 1V6.5H26.5" fill="#c9ced6"/><path d="M8.5 5H17M8.5 8H15M8.5 11.5H22" stroke="#4b596d" stroke-width="1.2"/><rect x="0" y="16.5" width="32" height="13" rx="2" fill="#eeeeee"/><circle cx="27" cy="22" r="1.3" fill="#4b596d"/></svg>
<svg style="left:17px;top:463px" width="28" height="33" viewBox="0 0 28 33"><path d="M9.5 1H18.5M10.5 1V11L1.5 29Q1 32 4 32H24Q27 32 26.5 29L17.5 11V1" fill="#b4b9c2" stroke="#eeeeee" stroke-width="1.8" stroke-linejoin="round"/><path d="M11 2V11L8.5 16H19.5L17 11V2Z" fill="#4b596d"/><circle cx="12.5" cy="20" r="2.6" fill="#eeeeee"/><circle cx="17.5" cy="25.5" r="2.4" fill="#eeeeee"/><circle cx="8.5" cy="25.5" r="1.5" fill="#eeeeee"/></svg>
<svg style="left:19px;top:510px" width="27" height="31" viewBox="0 0 27 31"><path d="M0 0H18L27 9V31H0Z" fill="#eeeeee"/><path d="M18 0V9H27" fill="none" stroke="#4b596d" stroke-width="1.4"/><path d="M4 18.5H23M4 21.5H23M4 24.5H23M4 27.5H23" stroke="#8d95a2" stroke-width="1.3"/></svg>
<svg style="left:17px;top:556px" width="27" height="30" viewBox="0 0 27 30"><rect x="0" y="0" width="27" height="30" fill="#ffffff"/><circle cx="19.5" cy="5.5" r="3" fill="#4b596d"/><path d="M14.5 12Q14.5 8.8 19.5 8.8Q24.5 8.8 24.5 12Z" fill="#4b596d"/><path d="M4 4.5H9M4 7H9" stroke="#4b596d" stroke-width="1"/><path d="M4 17H22M4 20H22M4 23H22" stroke="#7d8593" stroke-width="1.3"/><path d="M16 27L22 25.5" stroke="#4b596d" stroke-width="0.9"/></svg>
<svg style="left:17px;top:603px" width="30" height="28" viewBox="0 0 30 28"><path d="M15 3V27" stroke="#eeeeee" stroke-width="2.6"/><circle cx="15" cy="2.5" r="2.2" fill="#eeeeee"/><path d="M14 6Q7 3 0.5 6Q5 10 13.5 10Z M16 6Q23 3 29.5 6Q25 10 16.5 10Z" fill="#d8dbe0"/><path d="M10 12Q15 15 20 12M10 17Q15 20 20 17M11 22Q15 24 19 22" fill="none" stroke="#d0d3d8" stroke-width="1.5"/></svg>
<svg style="left:20px;top:649px" width="24" height="31" viewBox="0 0 24 31"><rect x="0" y="2.5" width="24" height="28" rx="1" fill="#eeeeee"/><rect x="1.5" y="0" width="2" height="3" fill="#eeeeee"/><rect x="5.8" y="0" width="2" height="3" fill="#eeeeee"/><rect x="10.1" y="0" width="2" height="3" fill="#eeeeee"/><rect x="14.399999999999999" y="0" width="2" height="3" fill="#eeeeee"/><rect x="18.7" y="0" width="2" height="3" fill="#eeeeee"/><rect x="23.0" y="0" width="2" height="3" fill="#eeeeee"/><path d="M3 7.5H21M3 11.5H21M3 15.5H21M3 19.5H21M3 23.5H21" stroke="#4b596d" stroke-width="1.3"/></svg>
<svg style="left:15px;top:698px" width="32" height="22" viewBox="0 0 32 22"><path d="M1.5 0V22M30.5 5V22" stroke="#eeeeee" stroke-width="3"/><rect x="1.5" y="12.5" width="29" height="4" fill="#eeeeee"/><rect x="4" y="5" width="25" height="6.5" fill="#d5d9df"/><circle cx="7" cy="7.5" r="1.6" fill="#4b596d"/></svg>
<svg style="left:15px;top:746px" width="33" height="24" viewBox="0 0 33 24"><rect x="0" y="0" width="2.5" height="24" fill="#eeeeee"/><rect x="5" y="0" width="2" height="24" fill="#eeeeee"/><rect x="9.5" y="0" width="4.5" height="24" fill="#eeeeee"/><rect x="15.5" y="0" width="1.5" height="24" fill="#eeeeee"/><rect x="18.5" y="0" width="1.5" height="24" fill="#eeeeee"/><rect x="22" y="0" width="4" height="24" fill="#eeeeee"/><rect x="28.5" y="0" width="1" height="24" fill="#eeeeee"/><rect x="31" y="0" width="2" height="24" fill="#eeeeee"/></svg>
<svg style="left:17px;top:791px" width="29" height="26" viewBox="0 0 29 26"><defs><linearGradient id="hg" x1="0" y1="0" x2="0" y2="1"><stop offset="0" stop-color="#ffffff"/><stop offset="1" stop-color="#dde2ea"/></linearGradient></defs><path d="M14.5 25.5L2.5 13.5Q-1.5 8.5 2 4Q5.5 0 9.5 0.8Q12.5 1.5 14.5 4.5Q16.5 1.5 19.5 0.8Q23.5 0 27 4Q30.5 8.5 26.5 13.5Z" fill="url(#hg)"/></svg>
<svg style="left:20px;top:835px" width="23" height="31" viewBox="0 0 23 31"><rect x="5" y="0" width="13" height="6.5" rx="1" fill="#eeeeee"/><path d="M4.5 8H18.5Q20 8 20 11V17Q20 21 11.5 21Q3 21 3 17V11Q3 8 4.5 8Z" fill="#eeeeee"/><path d="M8 18Q11.5 16 15 18" stroke="#aab1bb" stroke-width="1"/><path d="M0 31V26Q0 22.5 4 22.5H8L11.5 25L15 22.5H19Q23 22.5 23 26V31Z" fill="#eeeeee"/></svg>
<svg style="left:20px;top:882px" width="23" height="31" viewBox="0 0 23 31"><rect x="5" y="0" width="13" height="6.5" rx="1" fill="#eeeeee"/><path d="M4.5 8H18.5Q20 8 20 11V17Q20 21 11.5 21Q3 21 3 17V11Q3 8 4.5 8Z" fill="#eeeeee"/><path d="M8 18Q11.5 16 15 18" stroke="#aab1bb" stroke-width="1"/><path d="M0 31V26Q0 22.5 4 22.5H8L11.5 25L15 22.5H19Q23 22.5 23 26V31Z" fill="#eeeeee"/></svg>
<svg style="left:11px;top:927px" width="36" height="35" viewBox="0 0 36 35"><path d="M1.5 2H7L13 26H31.5L34 10H9" fill="none" stroke="#eeeeee" stroke-width="3" stroke-linejoin="round"/><circle cx="14.5" cy="31.5" r="3" fill="#eeeeee"/><circle cx="28.5" cy="31.5" r="3" fill="#eeeeee"/><rect x="12.5" y="13.0" width="1.8" height="1.8" fill="#eeeeee"/><rect x="16.2" y="13.0" width="1.8" height="1.8" fill="#eeeeee"/><rect x="19.9" y="13.0" width="1.8" height="1.8" fill="#eeeeee"/><rect x="23.6" y="13.0" width="1.8" height="1.8" fill="#eeeeee"/><rect x="27.3" y="13.0" width="1.8" height="1.8" fill="#eeeeee"/><rect x="12.5" y="16.6" width="1.8" height="1.8" fill="#eeeeee"/><rect x="16.2" y="16.6" width="1.8" height="1.8" fill="#eeeeee"/><rect x="19.9" y="16.6" width="1.8" height="1.8" fill="#eeeeee"/><rect x="23.6" y="16.6" width="1.8" height="1.8" fill="#eeeeee"/><rect x="27.3" y="16.6" width="1.8" height="1.8" fill="#eeeeee"/><rect x="12.5" y="20.2" width="1.8" height="1.8" fill="#eeeeee"/><rect x="16.2" y="20.2" width="1.8" height="1.8" fill="#eeeeee"/><rect x="19.9" y="20.2" width="1.8" height="1.8" fill="#eeeeee"/><rect x="23.6" y="20.2" width="1.8" height="1.8" fill="#eeeeee"/><rect x="27.3" y="20.2" width="1.8" height="1.8" fill="#eeeeee"/></svg>
<svg style="left:21px;top:976px" width="22" height="31" viewBox="0 0 22 31"><path d="M11 2Q4 13 2.2 18Q1 21 1.5 23Q3 29.5 11 29.5Q19 29.5 20.5 23Q21 21 19.8 18Q18 13 11 2Z" fill="none" stroke="#eeeeee" stroke-width="1.9"/></svg>
<div class="a" style="left:1876px;top:125px;width:42px;height:906px;background:#d0dcf0;"></div>
<div class="a" style="left:1876px;top:63px;width:42px;height:62px;background:#c9daef;"></div>
<svg style="left:1888px;top:68px" width="22" height="22" viewBox="0 0 22 22"><path d="M8 5V2H20V14H16" fill="none" stroke="#666" stroke-width="1.8"/><rect x="1" y="8" width="12" height="12" fill="none" stroke="#666" stroke-width="1.8"/><path d="M18 4L5 17M4.5 10V17.5H12" fill="none" stroke="#666" stroke-width="2.2"/></svg>
<div class="a" style="left:1880px;top:128px;width:36px;height:33px;background:#e3e7ec;border:1px solid #cfd5dc;border-radius:2px"></div>
<svg style="left:1888px;top:133px" width="22" height="22" viewBox="0 0 22 22"><path d="M8 5V2H20V14H16" fill="none" stroke="#666" stroke-width="1.8"/><rect x="1" y="8" width="12" height="12" fill="none" stroke="#666" stroke-width="1.8"/><path d="M18 4L5 17M4.5 10V17.5H12" fill="none" stroke="#666" stroke-width="2.2"/></svg>
<div class="a" style="left:1880px;top:166px;width:36px;height:38px;background:#d5e2f3;border:1px solid #bfd0e6;border-radius:2px"></div>
<svg style="left:1882px;top:168px" width="32" height="34" viewBox="0 0 32 34"><path d="M17.5 1.5Q13.5 2 14 6Q15.5 12.5 21 16Q26.5 12.5 28 6Q28.5 2 24.5 1.5" fill="none" stroke="#1e1e1e" stroke-width="2.4" stroke-linecap="round"/><path d="M21 16V24Q21 28.5 16 28.5Q11 28.5 11 24V14.5Q11 10.5 7.5 10.5Q4 10.5 4 14.5V23.5" fill="none" stroke="#1e1e1e" stroke-width="2.4"/><circle cx="4" cy="27" r="3.2" fill="none" stroke="#1e1e1e" stroke-width="2.3"/></svg>
<div class="a" style="left:1880px;top:208px;width:36px;height:38px;background:#d5e2f3;border:1px solid #bfd0e6;border-radius:2px"></div>
<svg style="left:1885px;top:214px" width="24" height="24" viewBox="0 0 24 24"><rect x="1" y="3.0" width="2.6" height="2.6" fill="#5f636b"/><rect x="6" y="3.0" width="16" height="2.4" fill="#5f636b"/><rect x="1" y="8.3" width="2.6" height="2.6" fill="#5f636b"/><rect x="6" y="8.3" width="16" height="2.4" fill="#5f636b"/><rect x="1" y="13.6" width="2.6" height="2.6" fill="#5f636b"/><rect x="6" y="13.6" width="16" height="2.4" fill="#5f636b"/><rect x="1" y="18.9" width="2.6" height="2.6" fill="#5f636b"/><rect x="6" y="18.9" width="16" height="2.4" fill="#5f636b"/></svg>
<div class="a" style="left:1880px;top:249px;width:36px;height:37px;background:#d5e2f3;border:1px solid #bfd0e6;border-radius:2px"></div>
<svg style="left:1881px;top:256px" width="34" height="23" viewBox="0 0 34 23"><path d="M2.5 1V22M30 6V22" stroke="#474747" stroke-width="3.2" stroke-linecap="round"/><rect x="2.5" y="13" width="27.5" height="3.6" fill="#474747"/><path d="M5 8H28V12H5Z" fill="#5a5a5a"/><circle cx="8" cy="7" r="2.4" fill="#474747"/><path d="M11 6.5H27" stroke="#5a5a5a" stroke-width="2"/></svg>
<div class="a" style="left:1880px;top:290px;width:36px;height:39px;background:#d5e2f3;border:1px solid #bfd0e6;border-radius:2px"></div>
<svg style="left:1882px;top:297px" width="32" height="25" viewBox="0 0 32 25"><rect x="0.5" y="0.5" width="31" height="24" rx="2.5" fill="#4a4a4a"/><circle cx="10" cy="9" r="3.8" fill="#e8e8e8"/><path d="M3 20Q3 14 10 14Q17 14 17 20Z" fill="#e8e8e8"/><path d="M19 6H28M19 9.5H28M19 13H28" stroke="#e8e8e8" stroke-width="1.5"/></svg>
<div class="a" style="left:1880px;top:883px;width:36px;height:34px;background:#c9d7ea;border:1px solid #bccce2;border-radius:2px"></div>
<svg style="left:1885px;top:887px" width="26" height="26" viewBox="0 0 26 26"><rect x="1.5" y="2" width="5.5" height="5.5" fill="#5b7ea6"/><rect x="9.5" y="2" width="5.5" height="5.5" fill="#5b7ea6"/><rect x="17.5" y="2" width="5.5" height="5.5" fill="#5b7ea6"/><rect x="1.5" y="10" width="5.5" height="5.5" fill="#5b7ea6"/><rect x="9.5" y="10" width="5.5" height="5.5" fill="#5b7ea6"/><rect x="17.5" y="10" width="5.5" height="5.5" fill="#5b7ea6"/><rect x="1.5" y="18" width="5.5" height="5.5" fill="#5b7ea6"/><rect x="9.5" y="18" width="5.5" height="5.5" fill="#5b7ea6"/><rect x="17.5" y="18" width="5.5" height="5.5" fill="#5b7ea6"/></svg>
<div class="a" style="left:1880px;top:920px;width:36px;height:33px;background:#d5e2f3;border:1px solid #bfd0e6;border-radius:2px"></div>
<svg style="left:1882px;top:922px" width="30" height="28" viewBox="0 0 30 28"><rect x="1" y="1.5" width="28" height="25" rx="3" fill="#1b93ac"/><path d="M2 3.5L15 15L28 3.5M2 25L11.5 15.5M28 25L18.5 15.5" fill="none" stroke="#dff3f6" stroke-width="2.2"/></svg>
<div class="a" style="left:1880px;top:956px;width:36px;height:33px;background:#d5e2f3;border:1px solid #bfd0e6;border-radius:2px"></div>
<svg style="left:1883px;top:957px" width="30" height="30" viewBox="0 0 30 30"><path d="M15 2.5A11.5 11.5 0 1 1 15 25.5H3.5V14A11.5 11.5 0 0 1 15 2.5Z" fill="none" stroke="#3a7aab" stroke-width="2.4" stroke-linejoin="round"/><circle cx="10.5" cy="14" r="1.3" fill="#3a7aab"/><circle cx="15" cy="14" r="1.3" fill="#3a7aab"/><circle cx="19.5" cy="14" r="1.3" fill="#3a7aab"/></svg>
<div class="a" style="left:1880px;top:990px;width:36px;height:33px;background:#d5e2f3;border:1px solid #bfd0e6;border-radius:2px"></div>
<svg style="left:1883px;top:992px" width="30" height="30" viewBox="0 0 30 30"><defs><clipPath id="gc"><circle cx="15" cy="15" r="13.5"/></clipPath></defs><circle cx="15" cy="15" r="13.5" fill="#4a6fb6"/><g clip-path="url(#gc)" stroke="#d3ddf0" stroke-width="1.6" fill="none"><path d="M-2 9Q15 3 32 12M-2 17Q15 10 32 20M-2 25Q15 18 32 28"/><path d="M8 -2Q4 15 12 32M16 -2Q12 15 20 32M24 -2Q20 15 28 32"/></g></svg>
<div class="a" style="left:200px;top:229px;width:365px;height:4px;background:#fd2a2a;border-radius:2px"></div>
<div class="a" style="left:200px;top:229px;width:4px;height:364px;background:#fd2a2a;border-radius:2px"></div>
<div class="a" style="left:1865px;top:621px;width:4px;height:366px;background:#fd2a2a;border-radius:2px"></div>
<div class="a" style="left:1504px;top:983px;width:365px;height:4px;background:#fd2a2a;border-radius:2px"></div>
<div class="t" style="left:1446.0px;top:983.3px;font-size:26.00px;color:rgba(120,120,120,0.38);">Windows&#x27;u Etkinleştir</div>
<div class="t" style="left:1446.0px;top:1015.2px;font-size:18.00px;color:rgba(120,120,120,0.38);transform:scale(1.102,1.000);transform-origin:0 50%;">Windows&#x27;u etkinleştirmek için Ayarlar&#x27;a gidin.</div>
</body></html>
